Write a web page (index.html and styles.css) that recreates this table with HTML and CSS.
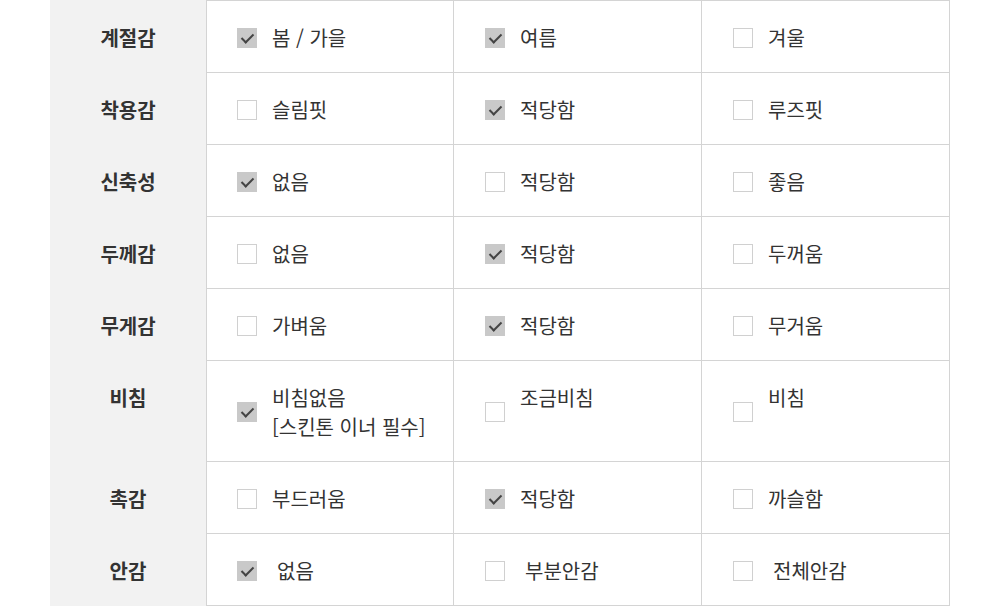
FILE: index.html
```html
<!DOCTYPE html>
<html lang="ko">
<head>
  <meta charset="UTF-8" />
  <meta name="viewport" content="width=device-width, initial-scale=1.0"/>
  <title>상품 정보</title>
  <link rel="stylesheet" href="styles.css">
</head>
<body>
  <div class="spec">
    <!-- 계절감 -->
    <div class="spec-head">계절감</div>
    <div class="spec-cell"><span class="chk on"></span><span class="txt">봄 / 가을</span></div>
    <div class="spec-cell"><span class="chk on"></span><span class="txt">여름</span></div>
    <div class="spec-cell"><span class="chk"></span><span class="txt">겨울</span></div>

    <!-- 착용감 -->
    <div class="spec-head">착용감</div>
    <div class="spec-cell"><span class="chk"></span><span class="txt">슬림핏</span></div>
    <div class="spec-cell"><span class="chk on"></span><span class="txt">적당함</span></div>
    <div class="spec-cell"><span class="chk"></span><span class="txt">루즈핏</span></div>

    <!-- 신축성 -->
    <div class="spec-head">신축성</div>
    <div class="spec-cell"><span class="chk on"></span><span class="txt">없음</span></div>
    <div class="spec-cell"><span class="chk"></span><span class="txt">적당함</span></div>
    <div class="spec-cell"><span class="chk"></span><span class="txt">좋음</span></div>

    <!-- 두께감 -->
    <div class="spec-head">두께감</div>
    <div class="spec-cell"><span class="chk"></span><span class="txt">없음</span></div>
    <div class="spec-cell"><span class="chk on"></span><span class="txt">적당함</span></div>
    <div class="spec-cell"><span class="chk"></span><span class="txt">두꺼움</span></div>

    <!-- 무게감 -->
    <div class="spec-head">무게감</div>
    <div class="spec-cell"><span class="chk"></span><span class="txt">가벼움</span></div>
    <div class="spec-cell"><span class="chk on"></span><span class="txt">적당함</span></div>
    <div class="spec-cell"><span class="chk"></span><span class="txt">무거움</span></div>

    <!-- 비침 -->
    <div class="spec-head">비침</div>
    <div class="spec-cell"><span class="chk on"></span><span class="txt">비침없음<br>[스킨톤 이너 필수]</span></div>
    <div class="spec-cell"><span class="chk"></span><span class="txt">조금비침</span></div>
    <div class="spec-cell"><span class="chk"></span><span class="txt">비침</span></div>

    <!-- 촉감 -->
    <div class="spec-head">촉감</div>
    <div class="spec-cell"><span class="chk"></span><span class="txt">부드러움</span></div>
    <div class="spec-cell"><span class="chk on"></span><span class="txt">적당함</span></div>
    <div class="spec-cell"><span class="chk"></span><span class="txt">까슬함</span></div>

    <!-- 안감 -->
    <div class="spec-head">안감</div>
    <div class="spec-cell"><span class="chk on"></span><span class="txt pad">없음</span></div>
    <div class="spec-cell"><span class="chk"></span><span class="txt pad">부분안감</span></div>
    <div class="spec-cell"><span class="chk"></span><span class="txt pad">전체안감</span></div>
  </div>
</body>
</html>
```

FILE: styles.css
```css
body {
  margin: 0;
  background: #fff;
  font-family: "Noto Sans CJK KR", "Noto Sans", sans-serif;
  color: #333;
}

.spec {
  display: grid;
  grid-template-columns: 156px repeat(3, 248px);
  width: 900px;
  margin: 0 auto;
}

.spec-head {
  background-color: #f2f2f2;
  font-size: 20px;
  font-weight: bold;
  line-height: 29px;
  text-align: center;
  padding: 22px 0 20px;
  color: #333;
}

.spec-head:first-child {
  padding-top: 23px;
}

.spec-cell {
  display: flex;
  align-items: center;
  gap: 15px;
  padding: 22px 10px 20px 31px;
  font-size: 20px;
  line-height: 29px;
  border-right: 1px solid #d4d4d4;
  border-bottom: 1px solid #d4d4d4;
}

/* first data column carries the left rule, first row the top rule */
.spec-head + .spec-cell {
  border-left: 1px solid #d4d4d4;
  padding-left: 30px;
}

.spec > .spec-cell:nth-child(-n+4) {
  border-top: 1px solid #d4d4d4;
}

.txt {
  align-self: flex-start;
  color: #333;
}

.txt.pad {
  padding-left: 5px;
}

.chk {
  position: relative;
  flex: none;
  width: 20px;
  height: 20px;
  box-sizing: border-box;
  border: 1px solid #d0d0d0;
  background: #fff;
}

.chk.on {
  background: #c9c9c9;
  border-color: #c9c9c9;
}

.chk.on:after {
  content: "";
  position: absolute;
  left: 6px; top: 2px;
  width: 5px; height: 10px;
  border-right: 2px solid #444;
  border-bottom: 2px solid #444;
  transform: rotate(45deg);
}
```
